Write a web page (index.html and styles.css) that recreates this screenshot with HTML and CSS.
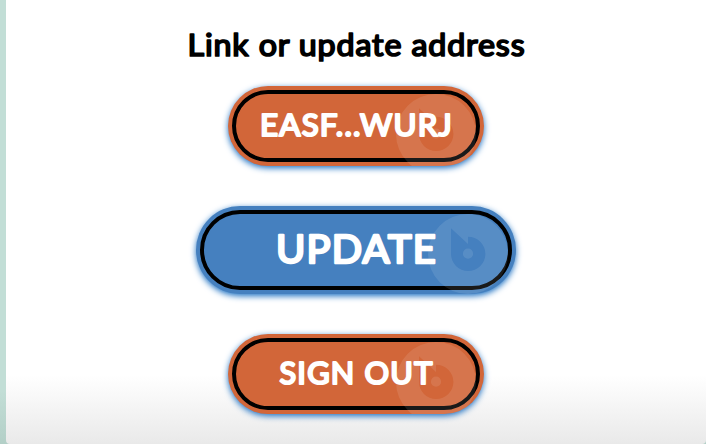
FILE: index.html
```html
<!DOCTYPE html>
<html lang="en">
<head>
<meta charset="utf-8">
<title>Link or update address</title>
<link rel="stylesheet" href="styles.css">
</head>
<body>
<svg width="0" height="0" class="defs"><defs><symbol id="coin" viewBox="0 0 80 80"><path fill-rule="evenodd" d="M40 0A40 40 0 1 1 40 80A40 40 0 1 1 40 0ZM23 14.3L40 30V22.7A17.2 17.2 0 1 1 23 39.7ZM40 34.6A5.1 5.1 0 1 0 40 44.8A5.1 5.1 0 1 0 40 34.6Z"/></symbol></defs></svg>
<main class="panel">
<h1 class="title"><svg class="label" width="360" height="36"><text x="180.5" y="28.5" textLength="338" lengthAdjust="spacingAndGlyphs">Link or update address</text></svg></h1>
<button class="pill address"><svg class="coin"><use href="#coin"/></svg><svg class="label" width="256" height="80"><text x="128.5" y="49.8" textLength="193" lengthAdjust="spacingAndGlyphs">EASF...WURJ</text></svg></button>
<button class="pill update"><svg class="coin"><use href="#coin"/></svg><svg class="label" width="320" height="88"><text x="160.5" y="56.7" textLength="161" lengthAdjust="spacingAndGlyphs">UPDATE</text></svg></button>
<button class="pill signout"><svg class="coin"><use href="#coin"/></svg><svg class="label" width="256" height="80"><text x="128.5" y="49.8" textLength="154" lengthAdjust="spacingAndGlyphs">SIGN OUT</text></svg></button>
</main>
</body>
</html>
```
FILE: styles.css
```css
* { box-sizing: border-box; }
body { margin: 0; height: 444px; overflow: hidden; background: linear-gradient(#c2ded6 88%, #b3cfc7); padding-left: 6px; font-family: Lato, "Open Sans", sans-serif; }
.defs { position: absolute; }
.panel { height: 444px; background: linear-gradient(#fff 375px, #f8f8f8 398px, #e9e9e9); border-radius: 0 0 4px 4px; display: flex; flex-direction: column; align-items: center; }
.title { margin: 27px 0 0; height: 36px; color: #000; font-size: 30px; font-weight: 400; }
.label { display: block; position: relative; flex: none; }
.label text { text-anchor: middle; letter-spacing: .8px; fill: currentColor; stroke: currentColor; stroke-width: 1.7px; stroke-linejoin: round; stroke-linecap: round; }
.pill { position: relative; flex: none; display: flex; align-items: center; justify-content: center; overflow: hidden; width: 256px; height: 80px; margin: 0 0 40px; padding: 0; border: 0; border-radius: 44px; background: #d26639; color: #fff; font: 400 30px Lato, "Open Sans", sans-serif; box-shadow: 0 2px 6px #1c70c2; }
.pill::before { content: ""; position: absolute; inset: 4px; border: 4px solid #000; border-radius: 40px; }
.pill .label text { letter-spacing: 1.2px; stroke-width: 2.2px; }
.address { margin-top: 23px; }
.update { width: 320px; height: 88px; background: #4580bf; font-size: 38px; }
.update .label text { stroke-width: 2.5px; }
.coin { position: absolute; right: 8px; top: 8px; width: 80px; height: 80px; fill: rgba(255,255,255,.1); }
```
